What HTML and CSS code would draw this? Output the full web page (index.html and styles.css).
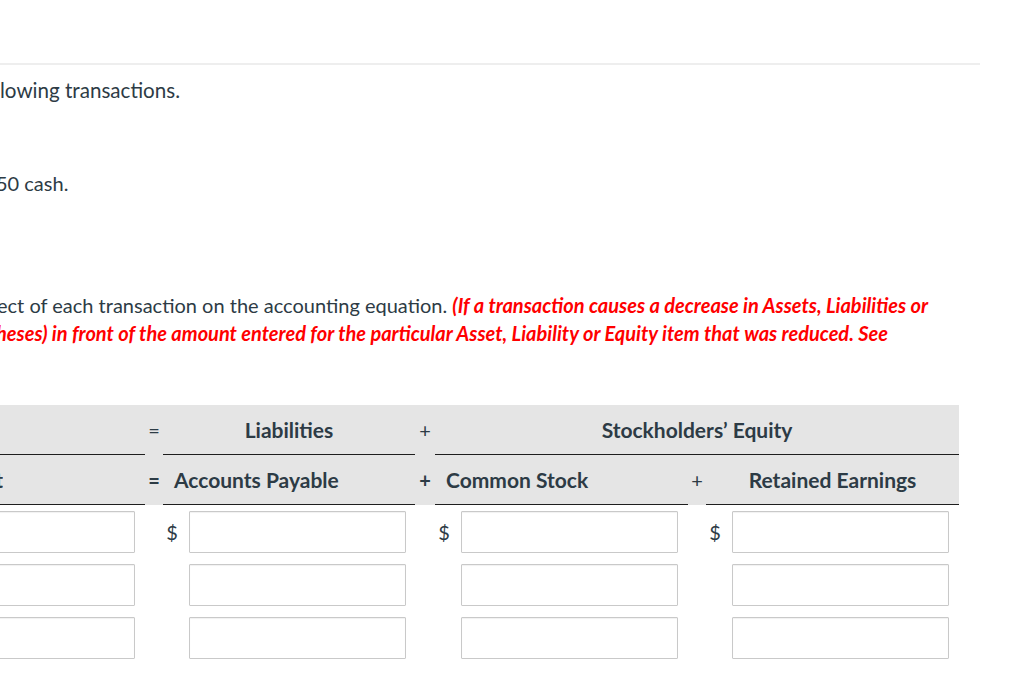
FILE: index.html
```html
<!DOCTYPE html>
<html lang="en">
<head>
<meta charset="utf-8">
<title>Accounting equation</title>
<link rel="stylesheet" href="styles.css">
</head>
<body>
<div class="page">
  <div class="question">
    <p class="para p1">lowing transactions.</p>
    <p class="para p2">50 cash.</p>
    <p class="para p3"><span class="line l1">ect of each transaction on the accounting equation. <em class="warn">(If a transaction causes a decrease in Assets, Liabilities or</em></span><span class="line l2"><em class="warn">heses) in front of the amount entered for the particular Asset, Liability or Equity item that was reduced. See</em></span></p>
  </div>

  <div class="eq">
    <!-- header row 1 -->
    <div class="hd r1 col"></div>
    <div class="hd r1 op">=</div>
    <div class="hd r1 col center">Liabilities</div>
    <div class="hd r1 op">+</div>
    <div class="hd r1 col center span3">Stockholders’ Equity</div>

    <!-- header row 2 -->
    <div class="hd r2 col frag"><span class="fragtext">Equipment</span></div>
    <div class="hd r2 op b">=</div>
    <div class="hd r2 col left">Accounts Payable</div>
    <div class="hd r2 op b">+</div>
    <div class="hd r2 col left">Common Stock</div>
    <div class="hd r2 op">+</div>
    <div class="hd r2 col center">Retained Earnings</div>

    <!-- input rows -->
    <div class="cell first"><span class="box"></span></div>
    <div class="cell"></div>
    <div class="cell money"><span class="dollar">$</span><span class="box"></span></div>
    <div class="cell"></div>
    <div class="cell money"><span class="dollar">$</span><span class="box"></span></div>
    <div class="cell"></div>
    <div class="cell money"><span class="dollar">$</span><span class="box"></span></div>

    <div class="cell first"><span class="box"></span></div>
    <div class="cell"></div>
    <div class="cell money"><span class="dollar"></span><span class="box"></span></div>
    <div class="cell"></div>
    <div class="cell money"><span class="dollar"></span><span class="box"></span></div>
    <div class="cell"></div>
    <div class="cell money"><span class="dollar"></span><span class="box"></span></div>

    <div class="cell first"><span class="box"></span></div>
    <div class="cell"></div>
    <div class="cell money"><span class="dollar"></span><span class="box"></span></div>
    <div class="cell"></div>
    <div class="cell money"><span class="dollar"></span><span class="box"></span></div>
    <div class="cell"></div>
    <div class="cell money"><span class="dollar"></span><span class="box"></span></div>
  </div>
</div>
</body>
</html>
```

FILE: styles.css
```css
html, body {
  margin: 0;
  padding: 0;
  background: #fff;
  overflow: hidden;
}

body {
  font-family: Lato, "Open Sans", "DejaVu Sans", sans-serif;
  color: #2d3b45;
  font-size: 20px;
  line-height: 28px;
}

.page {
  width: 1024px;
  padding-top: 63px;
}

.question {
  width: 980px;
  border-top: 2px solid #eeeeee;
}

.para {
  margin: 0;
  white-space: nowrap;
}

.p1 {
  margin-top: 11px;
  font-size: 20.6px;
}

.p2 {
  margin-top: 65px;
  text-indent: -4px;
}

.p3 {
  margin-top: 94px;
}

.line {
  display: block;
}

.l1 {
  margin-left: -3px;
}

.l2 {
  margin-left: -4px;
}

.warn {
  color: #ff0000;
  font-weight: 700;
  font-style: italic;
}

/* equation table */
.eq {
  display: grid;
  grid-template-columns: 245px 18px 252px 20px 253px 18px 253px;
  margin-left: -100px;
  margin-top: 58px;
}

.hd {
  background: #e5e5e5;
  height: 49px;
  display: flex;
  align-items: center;
  font-weight: 700;
  font-size: 21px;
  white-space: nowrap;
}

.hd.r1.col,
.hd.r2.col {
  border-bottom: 1px solid #1e1e1e;
}

.hd.op {
  height: 50px;
  justify-content: center;
  font-weight: 400;
  font-size: 20px;
}

.hd.op.b {
  font-weight: 700;
}

.center {
  justify-content: center;
}

.left {
  padding-left: 11px;
}

.span3 {
  grid-column: span 3;
}

.frag {
  overflow: hidden;
}

.fragtext {
  display: block;
  width: 103px;
  text-align: right;
  overflow: hidden;
  flex: none;
  direction: rtl;
}

.cell {
  display: flex;
  align-items: center;
  height: 42px;
  margin-top: 6px;
  margin-bottom: 5px;
}

.cell.first {
  padding-right: 10px;
}

.cell.first .box {
  flex: 1;
}

.dollar {
  width: 18px;
  flex: none;
  text-align: center;
  margin-right: 8px;
}

.box {
  display: block;
  height: 42px;
  width: 217px;
  box-sizing: border-box;
  border: 1px solid #c9c9c9;
  border-radius: 1px;
  background: #fff;
  box-shadow: inset 0 1px 1px rgba(0, 0, 0, 0.06);
}
```
